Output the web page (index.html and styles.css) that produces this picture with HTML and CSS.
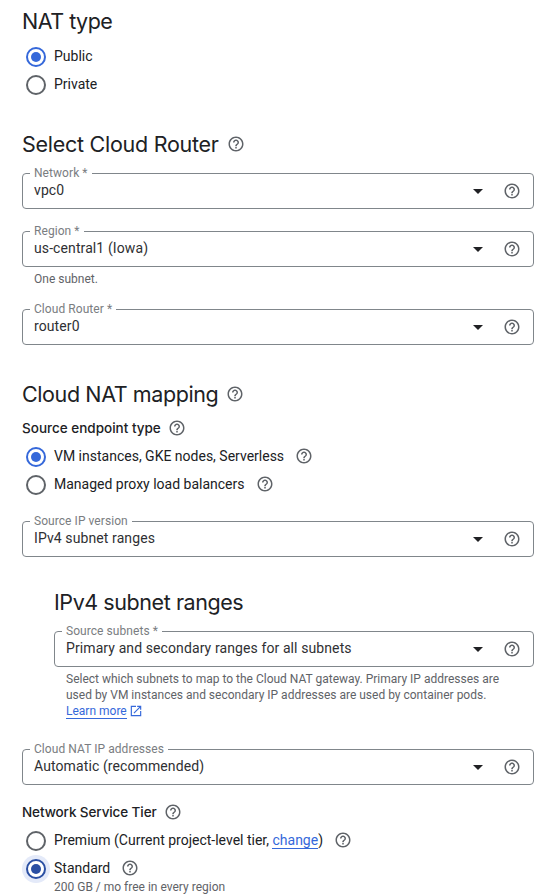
FILE: index.html
```html
<!DOCTYPE html>
<html lang="en">
<head>
<meta charset="utf-8">
<title>Cloud NAT</title>
<link rel="stylesheet" href="styles.css">
</head>
<body>
<svg class="defs" width="0" height="0" aria-hidden="true">
  <symbol id="help" viewBox="0 0 24 24"><path d="M11 18h2v-2h-2v2zm1-16C6.48 2 2 6.48 2 12s4.48 10 10 10 10-4.48 10-10S17.52 2 12 2zm0 18c-4.41 0-8-3.59-8-8s3.59-8 8-8 8 3.59 8 8-3.59 8-8 8zm0-14c-2.21 0-4 1.79-4 4h2c0-1.1.9-2 2-2s2 .9 2 2c0 2-3 1.75-3 5h2c0-2.25 3-2.5 3-5 0-2.21-1.79-4-4-4z"/></symbol>
  <symbol id="open" viewBox="0 0 24 24"><path d="M19 19H5V5h7V3H3v18h18v-9h-2v7zM14 3v2h3.59l-9.83 9.83 1.41 1.41L19 6.41V10h2V3h-7z"/></symbol>
</svg>
<main class="form">
  <section class="section">
    <h2 class="title"><span class="t-type">NAT type</span></h2>
    <div class="radios">
      <label class="radio"><span class="dot on"></span><span>Public</span></label>
      <label class="radio"><span class="dot"></span><span>Private</span></label>
    </div>
  </section>

  <section class="section router">
    <h2 class="title"><span class="t-router">Select Cloud Router</span><svg class="help"><use href="#help"/></svg></h2>
    <div class="field"><span class="label">Network *</span><span class="value">vpc0</span><i class="arrow"></i><svg class="help"><use href="#help"/></svg></div>
    <div class="field"><span class="label">Region *</span><span class="value">us-central1 (Iowa)</span><i class="arrow"></i><svg class="help"><use href="#help"/></svg></div>
    <p class="hint">One subnet.</p>
    <div class="field"><span class="label">Cloud Router *</span><span class="value">router0</span><i class="arrow"></i><svg class="help"><use href="#help"/></svg></div>
  </section>

  <section class="section mapping">
    <h2 class="title"><span class="t-mapping">Cloud NAT mapping</span><svg class="help"><use href="#help"/></svg></h2>
    <h3 class="subtitle"><span class="t-source">Source endpoint type</span><svg class="help"><use href="#help"/></svg></h3>
    <div class="radios tight">
      <label class="radio"><span class="dot on"></span><span>VM instances, GKE nodes, Serverless</span><svg class="help"><use href="#help"/></svg></label>
      <label class="radio"><span class="dot"></span><span>Managed proxy load balancers</span><svg class="help"><use href="#help"/></svg></label>
    </div>
    <div class="field"><span class="label">Source IP version</span><span class="value">IPv4 subnet ranges</span><i class="arrow"></i><svg class="help"><use href="#help"/></svg></div>
    <div class="nested">
      <h2 class="title"><span class="t-ranges">IPv4 subnet ranges</span></h2>
      <div class="field"><span class="label">Source subnets *</span><span class="value">Primary and secondary ranges for all subnets</span><i class="arrow"></i><svg class="help"><use href="#help"/></svg></div>
      <p class="hint">Select which subnets to map to the Cloud NAT gateway. Primary IP addresses are<br>used by VM instances and secondary IP addresses are used by container pods.<br><a class="link">Learn more</a><svg class="open"><use href="#open"/></svg></p>
    </div>
    <div class="field addresses"><span class="label">Cloud NAT IP addresses</span><span class="value">Automatic (recommended)</span><i class="arrow"></i><svg class="help"><use href="#help"/></svg></div>
    <h3 class="subtitle tier"><span class="t-tier">Network Service Tier</span><svg class="help"><use href="#help"/></svg></h3>
    <div class="radios tight">
      <label class="radio"><span class="dot"></span><span>Premium (Current project-level tier, <a class="link">change</a>)</span><svg class="help"><use href="#help"/></svg></label>
      <label class="radio"><span class="dot on focus"></span><span>Standard</span><svg class="help"><use href="#help"/></svg></label>
      <p class="note">200 GB / mo free in every region</p>
    </div>
  </section>
</main>
</body>
</html>
```
FILE: styles.css
```css
* { box-sizing: border-box; }
body {
  margin: 0;
  height: 896px;
  overflow: hidden;
  background: #fff;
  color: #202124;
  font: 400 14px/20px Roboto, sans-serif;
}
.defs { position: absolute; }
.form { padding: 7px 18px 0 22px; }
h2, h3, p { margin: 0; }
.title {
  display: flex;
  align-items: center;
  gap: 8px;
  height: 28px;
  font: 370 21.5px/28px Inter, sans-serif;
  letter-spacing: -0.35px;
  white-space: nowrap;
}
.title > span { margin-top: -1px; }
.t-type { letter-spacing: -0.5px; }
.t-router { letter-spacing: -0.27px; }
.t-mapping { letter-spacing: -0.4px; }
.t-ranges { letter-spacing: -0.43px; }
.subtitle {
  display: flex;
  align-items: center;
  gap: 7px;
  height: 20px;
  margin-top: 10px;
  font: 500 13.5px/20px Inter, sans-serif;
  letter-spacing: -0.1px;
  white-space: nowrap;
}
.t-source { letter-spacing: 0; }
.help { flex: none; width: 18px; height: 18px; fill: #5f6368; }
.radios { margin-top: 8px; padding-left: 4px; }
.radios.tight { margin-top: 5px; }
.radio { display: flex; align-items: center; height: 28px; white-space: nowrap; }
.radio > span:nth-child(2) { margin-top: -2px; }
.radio .help { margin: -2px 0 0 11px; }
.dot {
  flex: none;
  display: flex;
  align-items: center;
  justify-content: center;
  width: 20px;
  height: 20px;
  margin-right: 8px;
  border: 2px solid #5f6368;
  border-radius: 50%;
}
.dot.on { border-color: #3568da; }
.dot.on::after { content: ""; width: 10px; height: 10px; border-radius: 50%; background: #3568da; }
.dot.focus { border-color: #2a4fa3; background: #fff; box-shadow: 0 0 0 4px #e4eaf9; }
.dot.focus::after { background: #2a4fa3; }
.section.router { margin-top: 31px; }
.section.mapping { margin-top: 35px; }
.field {
  position: relative;
  display: flex;
  align-items: center;
  height: 36px;
  margin-top: 22px;
  padding: 0 12px 0 11px;
  border: 1px solid #80868b;
  border-radius: 4px;
}
.title + .field { margin-top: 15px; }
.label {
  position: absolute;
  left: 7px;
  top: -9px;
  padding: 0 4px;
  background: #fff;
  color: #7a7d81;
  font-size: 12px;
  line-height: 16px;
  letter-spacing: 0.06px;
}
.value { flex: 1; margin-top: -2px; color: #2f3033; letter-spacing: 0.1px; }
.arrow {
  border: 5px solid transparent;
  border-top-color: #202124;
  border-bottom: 0;
  margin: 0 20px 0 0;
}
.hint, .note { color: #5f6368; font-size: 12px; line-height: 16px; white-space: nowrap; }
.hint { padding: 4px 0 0 12px; }
.nested { padding: 31px 0 0 32px; }
.addresses { margin-top: 30px; }
.tier { margin-top: 17px; }
.note { margin-top: -4px; padding-left: 28px; }
.link { color: #3568da; border-bottom: 1px solid #3568da; }
.open { width: 14px; height: 14px; margin-left: 2px; fill: #3568da; vertical-align: -3px; }
```
